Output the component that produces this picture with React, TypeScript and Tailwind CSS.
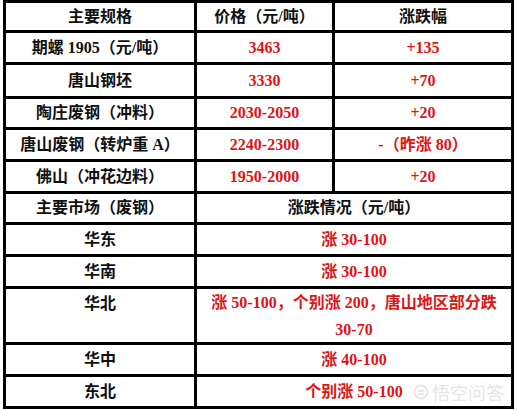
import React from "react";

const F = { fontFamily: '"Liberation Serif", "Noto Sans CJK SC", serif' };

function Cell({
  children,
  red,
  span,
  className = "",
}: {
  children: React.ReactNode;
  red?: boolean;
  span?: boolean;
  className?: string;
}) {
  return (
    <div
      className={`bg-white flex items-center justify-center text-[16px] font-bold leading-none whitespace-nowrap ${
        red ? "text-[#e01414]" : "text-[#111]"
      } ${span ? "col-span-2" : ""} ${className}`}
    >
      {children}
    </div>
  );
}

export default function App() {
  return (
    <div className="relative w-[517px] h-[410px] bg-white" style={F}>
      <div className="ml-[3px] w-[511px] bg-black p-[3px] grid grid-cols-[188px_135px_176px] grid-rows-[27px_29px_31px_28px_29px_29px_28px_29px_29px_53px_29px_29px] gap-[3px]">
        <Cell>主要规格</Cell>
        <Cell>价格（元/吨）</Cell>
        <Cell>涨跌幅</Cell>

        <Cell>期螺 1905（元/吨）</Cell>
        <Cell red>3463</Cell>
        <Cell red>+135</Cell>

        <Cell>唐山钢坯</Cell>
        <Cell red>3330</Cell>
        <Cell red>+70</Cell>

        <Cell>陶庄废钢（冲料）</Cell>
        <Cell red>2030-2050</Cell>
        <Cell red>+20</Cell>

        <Cell>唐山废钢（转炉重 A）</Cell>
        <Cell red>2240-2300</Cell>
        <Cell red>-（昨涨 80）</Cell>

        <Cell>佛山（冲花边料）</Cell>
        <Cell red>1950-2000</Cell>
        <Cell red>+20</Cell>

        <Cell>主要市场（废钢）</Cell>
        <Cell span>涨跌情况（元/吨）</Cell>

        <Cell>华东</Cell>
        <Cell span red>涨 30-100</Cell>

        <Cell>华南</Cell>
        <Cell span red>涨 30-100</Cell>

        <div className="bg-white text-[16px] font-bold text-[#111] text-center leading-[29px]">
          华北
        </div>
        <div className="col-span-2 bg-white text-[16px] font-bold text-[#e01414] text-center leading-[27px]">
          涨 50-100，个别涨 200，唐山地区部分跌
          <br />
          30-70
        </div>

        <Cell>华中</Cell>
        <Cell span red>涨 40-100</Cell>

        <Cell>东北</Cell>
        <Cell span red>个别涨 50-100</Cell>
      </div>

      <div
        className="absolute left-[413px] top-[383px] flex items-center gap-[3px] text-[18px] text-[#e6e6e6] leading-none"
        style={{ fontFamily: '"Noto Sans CJK SC", sans-serif' }}
      >
        <svg width="16" height="16" viewBox="0 0 16 16" fill="none" stroke="#e2e2e2" strokeWidth="1.5">
          <circle cx="8" cy="8" r="6.5" />
          <path d="M4.5 7h7M4.5 10h7" />
        </svg>
        <span>悟空问答</span>
      </div>
    </div>
  );
}
